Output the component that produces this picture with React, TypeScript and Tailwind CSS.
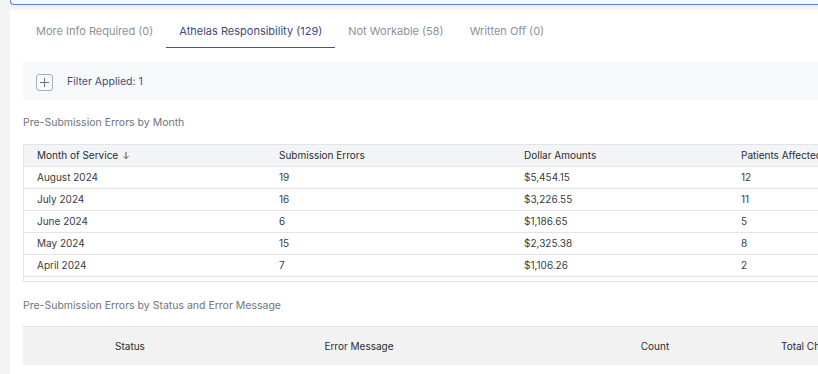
const months = [
  { month: "August 2024", errors: 19, amount: "$5,454.15", patients: 12 },
  { month: "July 2024", errors: 16, amount: "$3,226.55", patients: 11 },
  { month: "June 2024", errors: 6, amount: "$1,186.65", patients: 5 },
  { month: "May 2024", errors: 15, amount: "$2,325.38", patients: 8 },
  { month: "April 2024", errors: 7, amount: "$1,106.26", patients: 2 },
];

const tabs = [
  { label: "More Info Required (0)", active: false },
  { label: "Athelas Responsibility (129)", active: true },
  { label: "Not Workable (58)", active: false },
  { label: "Written Off (0)", active: false },
];

export default function App() {
  return (
    <div
      className="w-[818px] h-[374px] overflow-hidden bg-[#f3f4f6] text-[#333]"
      style={{ fontFamily: "Inter, 'Noto Sans', sans-serif" }}
    >
      {/* search box edge */}
      <div className="ml-[10px] h-[5px] bg-[#f8f9fb] border-l border-b border-[#5d7fce] rounded-bl-[4px]" />

      <div className="ml-[10px] mt-[5px] bg-white h-[364px] overflow-hidden">
        {/* TABS */}
        <div className="flex pl-[13px] pt-[12px] h-[50px]">
          {tabs.map((t) => (
            <div
              key={t.label}
              className={
                t.active
                  ? "px-[13px] h-[26px] pt-[2px] leading-[14px] text-[11px] text-[#3f4a78] border-b-[1.5px] border-[#4452a0]"
                  : "px-[13px] h-[26px] pt-[2px] leading-[14px] text-[11px] text-[#8c9099]"
              }
            >
              {t.label}
            </div>
          ))}
        </div>

        {/* FILTER */}
        <div className="ml-[13px] mt-[2px] h-[38px] bg-[#f8f9fb] flex items-center pl-[13px] gap-[14px]">
          <div className="w-[17px] h-[17px] mt-[2px] border border-[#a9adb5] rounded-[3px] flex items-center justify-center">
            <svg width="11" height="11" viewBox="0 0 11 11">
              <path d="M5.5 1v9M1 5.5h9" stroke="#6b7280" strokeWidth="1" />
            </svg>
          </div>
          <span className="text-[10.5px] mt-[2px] text-[#3f4c7c]">Filter Applied: 1</span>
        </div>

        {/* BY MONTH */}
        <div className="ml-[13px] mt-[16px] text-[10.5px] text-[#6f737b] h-[14px] leading-[14px]">
          Pre-Submission Errors by Month
        </div>

        <div className="ml-[13px] mt-[14px] w-[900px] border-l border-t border-b border-[#e3e4e7] pb-[4px] text-[10px]">
          <div className="flex h-[22px] items-center bg-[#f3f4f6] border-b border-[#e3e4e7] text-[#2a2c30]">
            <div className="w-[255px] pl-[13px] flex items-center gap-[4px]">
              Month of Service
              <svg width="8" height="9" viewBox="0 0 8 9">
                <path d="M4 1v6.5M1.5 5.2L4 7.7l2.5-2.5" stroke="#555" strokeWidth="1" fill="none" />
              </svg>
            </div>
            <div className="w-[245px]">Submission Errors</div>
            <div className="w-[217px]">Dollar Amounts</div>
            <div>Patients Affected</div>
          </div>
          {months.map((m) => (
            <div key={m.month} className="flex h-[22px] items-center border-b border-[#e3e4e7] text-[#3a3c40]">
              <div className="w-[255px] pl-[13px]">{m.month}</div>
              <div className="w-[245px]">{m.errors}</div>
              <div className="w-[217px]">{m.amount}</div>
              <div>{m.patients}</div>
            </div>
          ))}
        </div>

        {/* BY STATUS */}
        <div className="ml-[13px] mt-[17px] text-[10.5px] text-[#6f737b] h-[14px] leading-[14px]">
          Pre-Submission Errors by Status and Error Message
        </div>

        <div className="ml-[13px] mt-[13px] w-[900px] border-t border-[#e3e4e7] text-[10px]">
          <div className="flex h-[38px] items-center bg-[#f2f2f3] text-[#2a2c30]">
            <div className="w-[214px] text-center">Status</div>
            <div className="w-[244px] text-center">Error Message</div>
            <div className="w-[290px] pl-[58px] text-center">Count</div>
            <div className="pl-[10px]">Total Charges</div>
          </div>
        </div>
      </div>
    </div>
  );
}
